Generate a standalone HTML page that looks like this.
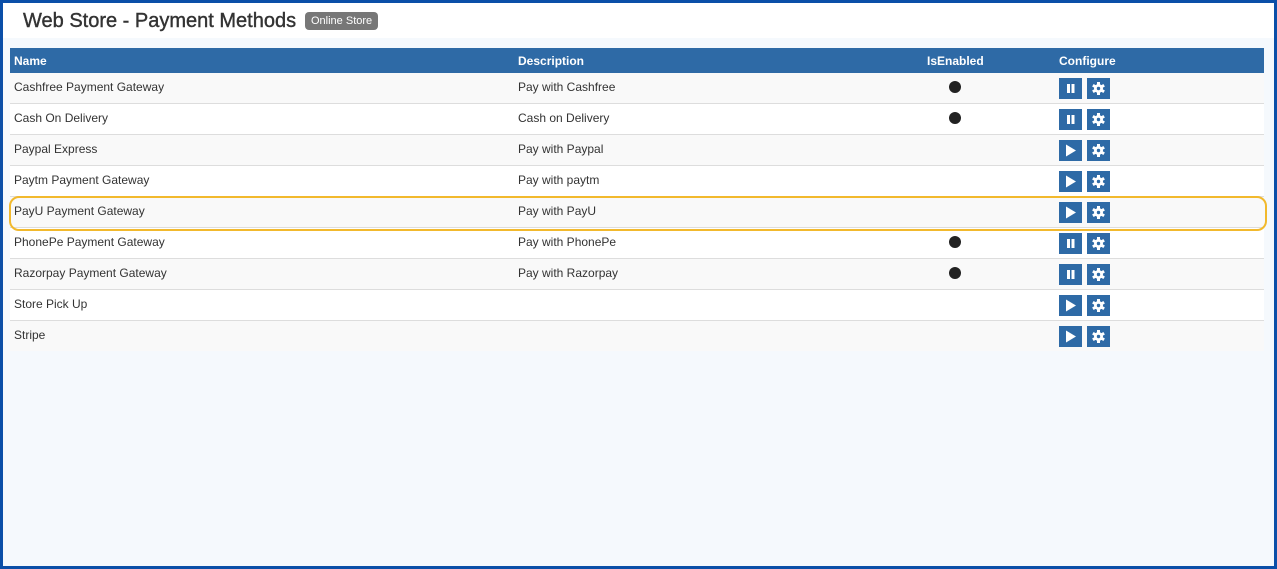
<html><head><style>
body{margin:0;width:1277px;height:569px;overflow:hidden;font-family:"Liberation Sans",sans-serif;}
.frame{position:absolute;left:0;top:0;width:1271px;height:563px;border:3px solid #0b4fa8;background:#f5f9fd;}
.top{position:absolute;left:0;top:0;width:1271px;height:35px;background:#fff;}
h1{position:absolute;left:20px;top:7px;margin:0;font-size:20px;font-weight:normal;color:#333;-webkit-text-stroke:.4px #333}
.badge{position:absolute;left:302px;top:9px;background:#777;color:#fff;font-size:11px;padding:3px 6px;border-radius:4px}
.tbl{position:absolute;left:7px;top:45px;width:1254px}
.hd{height:25px;background:#2e6aa6;color:#fff;font-weight:bold;font-size:12px;position:relative}
.r{height:30px;border-bottom:1px solid #ddd;position:relative;font-size:12px;color:#333}
.r:nth-child(odd){background:#f9f9f9}.r:nth-child(even){background:#fff}
.r:last-child{border-bottom:none}
.c{position:absolute;top:7px}
.hd .c{top:6px}
.dot{position:absolute;left:939px;top:8px;width:12px;height:12px;border-radius:50%;background:#222}
.b{position:absolute;top:5px;width:23px;height:21px;background:#2e6aa6}
.b1{left:1049px}.b2{left:1077px}
.hl{position:absolute;left:9px;top:196px;width:1254px;height:31px;border:2px solid #f2b92d;border-radius:10px}
</style></head><body>
<div class="frame"><div class="top"></div>
<h1>Web Store - Payment Methods</h1><div class="badge">Online Store</div>
<div class="tbl">
<div class="hd"><span class="c" style="left:4px">Name</span><span class="c" style="left:508px">Description</span><span class="c" style="left:917px">IsEnabled</span><span class="c" style="left:1049px">Configure</span></div>
<div id="rows"></div>
</div></div>
<div class="hl"></div>
<script>
var d=[["Cashfree Payment Gateway","Pay with Cashfree",1],["Cash On Delivery","Cash on Delivery",1],["Paypal Express","Pay with Paypal",0],["Paytm Payment Gateway","Pay with paytm",0],["PayU Payment Gateway","Pay with PayU",0],["PhonePe Payment Gateway","Pay with PhonePe",1],["Razorpay Payment Gateway","Pay with Razorpay",1],["Store Pick Up","",0],["Stripe","",0]];
var h="";
var gear='<svg width="23" height="21" viewBox="0 0 23 21"><g fill="#fff" transform="translate(11.5 10.5)"><circle r="4.5"/><rect x="-1.5" y="-6.5" width="3" height="13"/><rect x="-1.5" y="-6.5" width="3" height="13" transform="rotate(60)"/><rect x="-1.5" y="-6.5" width="3" height="13" transform="rotate(120)"/><circle r="1.7" fill="#2e6aa6"/></g></svg>';
d.forEach(function(x){h+='<div class="r"><span class="c" style="left:4px">'+x[0]+'</span><span class="c" style="left:508px">'+x[1]+'</span>'+(x[2]?'<div class="dot"></div>':'')+'<div class="b b1"><svg width="23" height="21">'+(x[2]?'<rect x="8" y="6" width="3" height="9" fill="#fff"/><rect x="12.5" y="6" width="3" height="9" fill="#fff"/>':'<path d="M7 4.5L17 10.5L7 16.5Z" fill="#fff"/>')+'</svg></div><div class="b b2">'+gear+'</div></div>'});
document.getElementById("rows").innerHTML=h;
</script>
</body></html>
